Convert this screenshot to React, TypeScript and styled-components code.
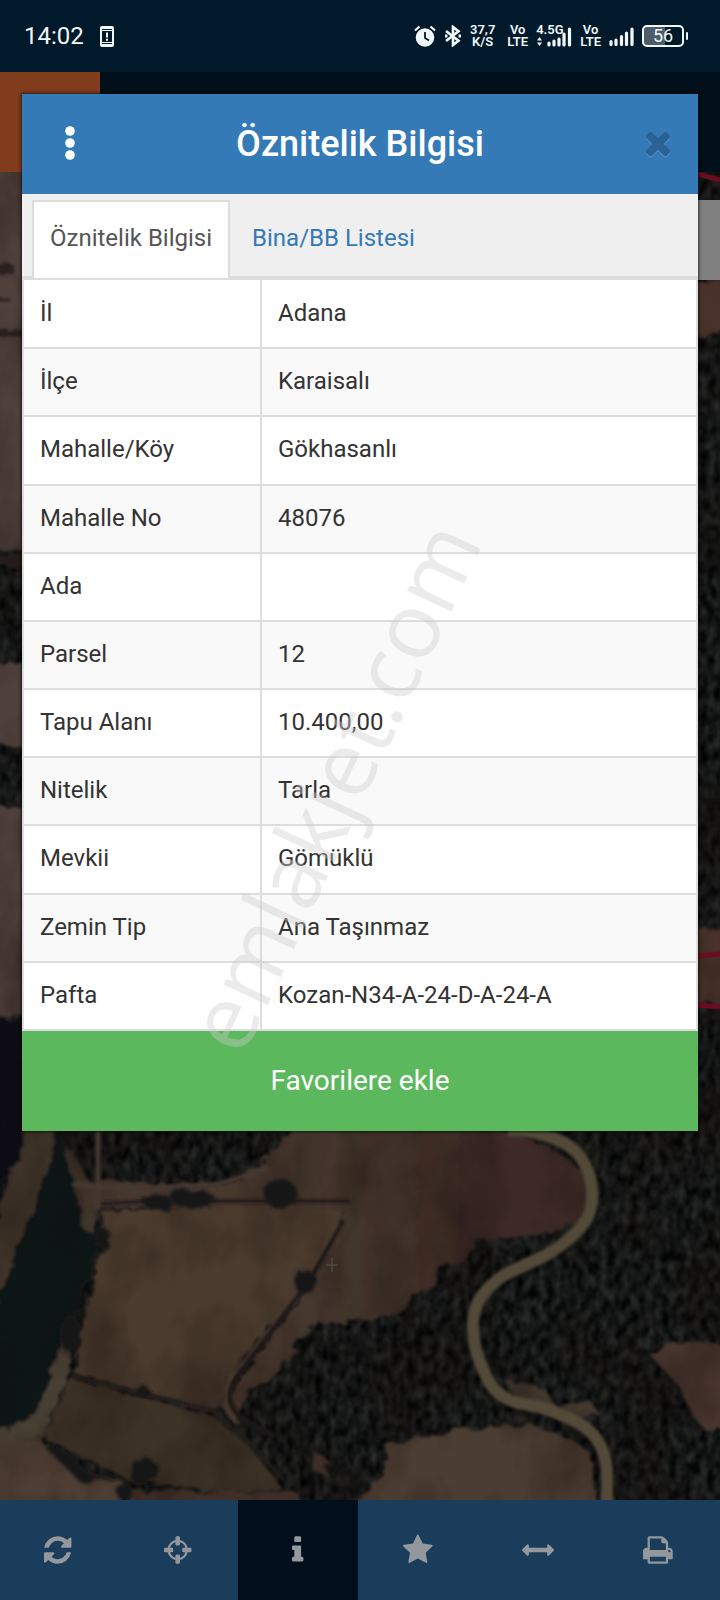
import styled, { createGlobalStyle } from "styled-components";

const headerBlue = "#347ab7";
const borderGray = "#dddddd";
const green = "#5cb85c";

const GlobalStyle = createGlobalStyle`
  * {
    box-sizing: border-box;
  }

  body {
    margin: 0;
    background: #00101c;
    color: #333333;
    font-family: Roboto, "Noto Sans", sans-serif;
    font-size: 24px;
    line-height: 32px;
  }

  button {
    border: none;
    padding: 0;
    background: transparent;
    color: inherit;
    font: inherit;
    cursor: pointer;
  }
`;

const Screen = styled.div`
  position: relative;
  display: flex;
  flex-direction: column;
  min-height: 100vh;
  overflow: hidden;
`;

const StatusBar = styled.header`
  display: flex;
  align-items: center;
  justify-content: space-between;
  height: 72px;
  padding: 0 36px 0 24px;
  background: #001a2b;
  color: #f2f7fa;
`;

const StatusGroup = styled.div<{ $gap: number }>`
  display: flex;
  align-items: center;
  gap: ${(p) => p.$gap}px;
`;

const StackedLabel = styled.div`
  display: flex;
  flex-direction: column;
  align-items: center;
  font-size: 13px;
  font-weight: 600;
  line-height: 12px;
`;

const NetworkSpeed = styled(StackedLabel)`
  margin-right: 4px;
`;

const Network = styled(StackedLabel)`
  position: relative;
  align-items: flex-start;
  width: 36px;
  height: 24px;

  svg {
    position: absolute;
    left: 0;
    bottom: 1px;
  }
`;

const Toolbar = styled.div`
  display: flex;
  height: 100px;
  background: #000f19;
`;

const ToolbarAccent = styled.div`
  width: 100px;
  background: #803c1c;
`;

const MapArea = styled.main`
  position: relative;
  flex: 1;
  min-height: 0;
  overflow: hidden;
  background: #17191a;
`;

const MapDrawing = styled.svg`
  position: absolute;
  width: 100%;
  height: 100%;
`;

const BottomNav = styled.nav`
  display: flex;
  height: 100px;
  margin-left: -2px;
  padding-right: 2px;
  background: #1b3d5c;
`;

const NavButton = styled.button<{ $active?: boolean }>`
  display: flex;
  flex: 1;
  align-items: center;
  justify-content: center;
  background: ${(p) => (p.$active ? "#000f1b" : "#1b3d5c")};
  color: #94979b;
`;

const Overlay = styled.div`
  position: absolute;
  inset: 0;
  padding: 94px 22px;
`;

const Dialog = styled.section`
  position: relative;
  background: #ffffff;
  box-shadow: 0 0 3px 1px rgba(0, 0, 0, 0.6);
`;

const DialogHeader = styled.div`
  display: flex;
  align-items: center;
  height: 100px;
  padding: 0 28px 0 36px;
  background: ${headerBlue};
  color: #ffffff;
`;

const Title = styled.h1`
  flex: 1;
  margin: 0;
  padding-right: 8px;
  font-size: 36px;
  font-weight: 500;
  line-height: 48px;
  text-align: center;
`;

const IconButton = styled.button<{ $faded?: boolean }>`
  display: flex;
  color: ${(p) => (p.$faded ? "#2a6294" : "#ffffff")};
  filter: ${(p) => (p.$faded ? "drop-shadow(0 2px 0 #4a8ac2)" : "none")};
`;

const TabList = styled.div`
  display: flex;
  padding: 6px 10px 0;
  border-bottom: 4px solid ${borderGray};
  background: #efefef;
`;

const Tab = styled.button<{ $active?: boolean }>`
  height: 78px;
  margin: 0 4px -2px 0;
  padding: 0 16px 4px;
  border: 2px solid ${(p) => (p.$active ? borderGray : "transparent")};
  border-bottom: none;
  background: ${(p) => (p.$active ? "#ffffff" : "transparent")};
  color: ${(p) => (p.$active ? "#555555" : headerBlue)};
`;

const AttributeTable = styled.table`
  width: 100%;
  height: 751px;
  border-collapse: collapse;

  tr:nth-child(even) {
    background: #f9f9f9;
  }

  th,
  td {
    height: 68px;
    padding: 0 16px 2px;
    border: 2px solid ${borderGray};
    font-weight: 400;
    text-align: left;
  }

  th {
    width: 238px;
  }

  tr:first-child > * {
    border-top: none;
  }
`;

const FavoriteButton = styled.button`
  display: block;
  width: 100%;
  height: 100px;
  background: ${green};
  color: #ffffff;
  font-size: 28px;
`;

const Watermark = styled.div`
  position: absolute;
  top: 50%;
  left: 50%;
  color: rgba(205, 205, 205, 0.4);
  font-family: "Open Sans", "Noto Sans", sans-serif;
  font-size: 91px;
  line-height: 90px;
  pointer-events: none;
  transform: translate(-55%, -66%) rotate(-65deg);
`;

interface GlyphProps {
  width: number;
  top?: number;
  d: string;
}

// Icon outlines share a 1792 unit em square, drawn at 32px
function Glyph({ width, top = 0, d }: GlyphProps) {
  return (
    <svg
      height="32"
      width={(width / 1792) * 32}
      viewBox={`0 ${top} ${width} 1792`}
      fill="currentColor"
      aria-hidden="true"
    >
      <path d={d} />
    </svg>
  );
}

const navItems: { label: string; active?: boolean; glyph: GlyphProps }[] = [
  {
    label: "Yenile",
    glyph: {
      width: 1536,
      top: -128,
      d: "M1511 928q0 5-1 7-64 268-268 434.5t-478 166.5q-146 0-282.5-55t-243.5-157l-129 129q-19 19-45 19t-45-19-19-45v-448q0-26 19-45t45-19h448q26 0 45 19t19 45-19 45l-137 137q71 66 161 102t187 36q134 0 250-65t186-179q11-17 53-117 8-23 30-23h192q13 0 22.5 9.5t9.5 22.5zm25-800v448q0 26-19 45t-45 19h-448q-26 0-45-19t-19-45 19-45l138-138q-148-137-349-137-134 0-250 65t-186 179q-11 17-53 117-8 23-30 23h-199q-13 0-22.5-9.5t-9.5-22.5v-7q65-268 270-434.5t480-166.5q146 0 284 55.5t245 156.5l130-129q19-19 45-19t45 19 19 45z",
    },
  },
  {
    label: "Konum",
    glyph: {
      width: 1536,
      d: "M1197 1024h-109q-26 0-45-19t-19-45v-128q0-26 19-45t45-19h109q-32-108-112.5-188.5t-188.5-112.5v109q0 26-19 45t-45 19h-128q-26 0-45-19t-19-45v-109q-108 32-188.5 112.5t-112.5 188.5h109q26 0 45 19t19 45v128q0 26-19 45t-45 19h-109q32 108 112.5 188.5t188.5 112.5v-109q0-26 19-45t45-19h128q26 0 45 19t19 45v109q108-32 188.5-112.5t112.5-188.5zm339-192v128q0 26-19 45t-45 19h-143q-37 161-154.5 278.5t-278.5 154.5v143q0 26-19 45t-45 19h-128q-26 0-45-19t-19-45v-143q-161-37-278.5-154.5t-154.5-278.5h-143q-26 0-45-19t-19-45v-128q0-26 19-45t45-19h143q37-161 154.5-278.5t278.5-154.5v-143q0-26 19-45t45-19h128q26 0 45 19t19 45v143q161 37 278.5 154.5t154.5 278.5h143q26 0 45 19t19 45z",
    },
  },
  {
    label: "Bilgi",
    active: true,
    glyph: {
      width: 640,
      d: "M640 1344v128q0 26-19 45t-45 19h-512q-26 0-45-19t-19-45v-128q0-26 19-45t45-19h64v-384h-64q-26 0-45-19t-19-45v-128q0-26 19-45t45-19h384q26 0 45 19t19 45v576h64q26 0 45 19t19 45zm-128-1152v192q0 26-19 45t-45 19h-256q-26 0-45-19t-19-45v-192q0-26 19-45t45-19h256q26 0 45 19t19 45z",
    },
  },
  {
    label: "Favoriler",
    glyph: {
      width: 1664,
      top: -32,
      d: "M1664 615q0 22-26 48l-363 354 86 500q1 7 1 20 0 21-10.5 35.5t-30.5 14.5q-19 0-40-12l-449-236-449 236q-22 12-40 12-21 0-31.5-14.5t-10.5-35.5q0-6 2-20l86-500-364-354q-25-27-25-48 0-37 56-46l502-73 225-455q19-41 49-41t49 41l225 455 502 73q56 9 56 46z",
    },
  },
  {
    label: "Ölçüm",
    glyph: {
      width: 1792,
      d: "M1792 896q0 26-19 45l-256 256q-19 19-45 19t-45-19-19-45v-128h-1024v128q0 26-19 45t-45 19-45-19l-256-256q-19-19-19-45t19-45l256-256q19-19 45-19t45 19 19 45v128h1024v-128q0-26 19-45t45-19 45 19l256 256q19 19 19 45z",
    },
  },
  {
    label: "Yazdır",
    glyph: {
      width: 1664,
      d: "M384 1536h896v-256h-896v256zm0-640h896v-384h-160q-40 0-68-28t-28-68v-160h-640v640zm1152 64q0-26-19-45t-45-19-45 19-19 45 19 45 45 19 45-19 19-45zm128 0v416q0 13-9.5 22.5t-22.5 9.5h-224v160q0 40-28 68t-68 28h-960q-40 0-68-28t-28-68v-160h-224q-13 0-22.5-9.5t-9.5-22.5v-416q0-79 56.5-135.5t135.5-56.5h64v-544q0-40 28-68t68-28h672q40 0 88 20t76 48l152 152q28 28 48 76t20 88v256h64q79 0 135.5 56.5t56.5 135.5z",
    },
  },
];

const attributes = [
  ["İl", "Adana"],
  ["İlçe", "Karaisalı"],
  ["Mahalle/Köy", "Gökhasanlı"],
  ["Mahalle No", "48076"],
  ["Ada", ""],
  ["Parsel", "12"],
  ["Tapu Alanı", "10.400,00"],
  ["Nitelik", "Tarla"],
  ["Mevkii", "Gömüklü"],
  ["Zemin Tip", "Ana Taşınmaz"],
  ["Pafta", "Kozan-N34-A-24-D-A-24-A"],
];

function PhoneAlertIcon() {
  return (
    <svg width="14" height="21" viewBox="0 0 14 21" aria-hidden="true">
      <rect width="14" height="21" rx="2" fill="currentColor" />
      <path d="M2 3.5h10M2 17.5h10" stroke="#001a2b" strokeWidth="1" />
      <rect x="2" y="5" width="10" height="11" fill="#001a2b" />
      <path d="M7 6.500v5M7 12.700v2" stroke="currentColor" strokeWidth="2" />
    </svg>
  );
}

function AlarmIcon() {
  return (
    <svg width="22" height="22" viewBox="0 0 22 22" aria-hidden="true">
      <circle cx="11" cy="12.500" r="9.300" fill="currentColor" />
      <path
        d="M1 5.500 5.500 1.500M21 5.500 16.500 1.500"
        stroke="currentColor"
        strokeWidth="2.200"
      />
      <path
        d="M11 7v6l4 2.500"
        fill="none"
        stroke="#001a2b"
        strokeWidth="1.800"
      />
    </svg>
  );
}

function BluetoothIcon() {
  return (
    <svg width="18" height="22" viewBox="0 0 18 22" aria-hidden="true">
      <path
        d="M2 6 14.500 15.800 9 20V2l5.500 4.200L2 16"
        fill="none"
        stroke="currentColor"
        strokeWidth="2.600"
      />
      <path d="M1 9.500h2.500v3H1zM14.500 9.500H17v3h-2.500z" fill="currentColor" />
    </svg>
  );
}

function SignalIcon() {
  return (
    <svg width="25" height="19" viewBox="0 0 25 19" aria-hidden="true">
      <path
        d="M2 17.500v-3M7 17.500V13M12.500 17.500V9.500M17.500 17.500V6M23 17.500V2"
        stroke="currentColor"
        strokeWidth="3.200"
        strokeLinecap="round"
      />
    </svg>
  );
}

function NetworkBarsIcon() {
  return (
    <svg width="36" height="22" viewBox="0 0 36 22" aria-hidden="true">
      <path d="M1 15.500 3.500 12 6 15.500zM1 17.500h5L3.500 21z" fill="currentColor" />
      <path
        d="M13 20v-2M18 20v-4M23 20v-6M28 20V9M33.500 20V4"
        stroke="currentColor"
        strokeWidth="3.200"
        strokeLinecap="round"
      />
    </svg>
  );
}

const BatteryShell = styled.div`
  position: relative;
  display: flex;
  align-items: center;
  justify-content: center;
  width: 42px;
  height: 22px;
  border: 2px solid currentColor;
  border-radius: 5px;
  background: linear-gradient(90deg, #4c5d69 56%, transparent 56%);
  font-size: 18px;
  line-height: 18px;

  &::after {
    position: absolute;
    top: 5px;
    right: -6px;
    width: 2px;
    height: 8px;
    border-radius: 1px;
    background: currentColor;
    content: "";
  }
`;

function Field({ d, fill }: { d: string; fill: string }) {
  return <path d={d} fill={fill} />;
}

function SatelliteMap() {
  return (
    <MapDrawing
      viewBox="0 172 720 1328"
      preserveAspectRatio="xMidYMid slice"
      aria-hidden="true"
    >
      <defs>
        <filter
          id="canopy"
          x="0"
          y="0"
          width="100%"
          height="100%"
          colorInterpolationFilters="sRGB"
        >
          <feTurbulence
            type="fractalNoise"
            baseFrequency="0.13 0.08"
            numOctaves="3"
            seed="4"
          />
          <feColorMatrix values="0.28 0 0 0 -0.06  0.28 0 0 0 -0.053  0.26 0 0 0 -0.045  0 0 0 0 1" />
          <feGaussianBlur stdDeviation="0.800" />
        </filter>
        <filter id="rough" x="-5%" y="-5%" width="110%" height="110%">
          <feTurbulence
            type="fractalNoise"
            baseFrequency="0.08"
            numOctaves="2"
            result="noise"
          />
          <feDisplacementMap in="SourceGraphic" in2="noise" scale="12" />
          <feGaussianBlur stdDeviation="1.500" />
        </filter>
        <filter
          id="soil"
          x="0"
          y="0"
          width="100%"
          height="100%"
          colorInterpolationFilters="sRGB"
        >
          <feTurbulence
            type="fractalNoise"
            baseFrequency="0.016 0.012"
            numOctaves="4"
            seed="9"
          />
          <feColorMatrix values="0 0 0 0 0.08  0 0 0 0 0.04  0 0 0 0 0.03  2 0 0 0 -0.75" />
        </filter>
        <filter id="soft">
          <feGaussianBlur stdDeviation="1.500" />
        </filter>
        <linearGradient id="upperField" x1="0" x2="1">
          <stop offset="0.400" stopColor="#46392f" />
          <stop offset="0.750" stopColor="#3d2c26" />
        </linearGradient>
      </defs>

      <rect y="172" width="720" height="1328" filter="url(#canopy)" />

      <g filter="url(#rough)">
        {/* strips on both sides of the dialog */}
        <Field d="M-10 160H34V550H-10zM-10 662H34V746H-10zM-10 806H34V1015H-10z" fill="#50403a" />
        <Field d="M690 280H730V332L690 338zM690 930 730 926V1006L690 1002z" fill="#4a3029" />
        <Field d="M-10 330H34V337H-10zM-10 264H14V274H-10zM-10 296H10V302H-10zM-10 556H34V566H-10z" fill="#292421" />

        {/* river bank and water */}
        <Field d="M28 1120H60L48 1180 70 1150 100 1200 90 1250 70 1300 72 1360 40 1440 -10 1460V1240z" fill="#40342a" />
        <Field d="M-10 1020H28L20 1160-10 1205z" fill="#0d1013" />
        <Field d="M58 1120 75 1190 84 1230 104 1234 96 1262 80 1305 62 1335 58 1355 43 1404 30 1422 -10 1434V1320L12 1262 36 1200 52 1160z" fill="#0c1619" />
        <Field d="M60 1354 71 1360 66 1385 44 1434 -10 1450V1432L32 1420z" fill="#4a4035" />

        {/* fields */}
        <Field d="M78 1182 110 1180 155 1184 230 1185 265 1160 300 1120 480 1120 550 1148 582 1170 593 1195 582 1222 540 1234 475 1242 465 1262 438 1266 434 1284 412 1298 400 1312 372 1320 310 1325 282 1370 250 1390 235 1425 220 1405 300 1300 345 1212 85 1206z" fill="url(#upperField)" />
        <Field d="M100 1210 300 1206 343 1212 336 1245 300 1294 240 1362 216 1412 74 1374 82 1320 103 1245z" fill="#4b3b2f" />
        <Field d="M72 1378 214 1416 250 1446 283 1490 220 1492 130 1480 44 1438z" fill="#3e3026" />
        <Field d="M-10 1444 40 1440 86 1474 122 1480V1510H-10z" fill="#4e3d33" />
        <Field d="M386 1444 460 1430 530 1424 572 1440 590 1453 598 1510H340L364 1494 384 1478z" fill="#4c3c31" />
        <Field d="M650 1355 670 1344 730 1343V1430H704L690 1410 680 1388z" fill="#46362d" />
        <Field d="M505 1380 545 1388 556 1408 590 1400 600 1414 580 1424 520 1404z" fill="#42372d" />
        <Field d="M130 1490 220 1492H300V1510H130zM312 1450 328 1460 326 1476 314 1470z" fill="#43332a" />
      </g>

      {/* soil shading */}
      <g opacity="0.4">
        <rect y="172" width="720" height="1328" filter="url(#soil)" />
      </g>

      <g filter="url(#soft)" fill="none" strokeLinejoin="round">
        <path d="M100 1204 150 1201 350 1201M72 1376 212 1410 250 1444 284 1480" stroke="#231f1a" strokeWidth="4" />
        <path d="M343 1220 312 1276 236 1378Q220 1402 244 1420L274 1436" stroke="#1b1815" strokeWidth="5" />
        <path d="M338 1224 300 1288 232 1376Q216 1404 240 1424" stroke="#4b3d31" strokeWidth="2" />
        <path d="M72 1184 140 1190 220 1184 268 1168M98 1130V1210" stroke="#453830" strokeWidth="5" />
        <path
          d="M508 1130Q560 1132 580 1156Q598 1184 590 1212Q580 1236 544 1256L506 1274Q474 1294 473 1322Q472 1348 486 1376Q496 1400 524 1404Q552 1408 580 1424Q604 1438 607 1470V1510"
          stroke="#524838"
          strokeWidth="12"
        />
      </g>

      {/* lone trees and hedges */}
      <g filter="url(#rough)" fill="#131513">
        <ellipse cx="280" cy="1193" rx="16" ry="15" />
        <ellipse cx="305" cy="1282" rx="11" ry="12" />
        <ellipse cx="157" cy="1202" rx="14" ry="8" />
        <ellipse cx="192" cy="1198" rx="22" ry="9" />
        <ellipse cx="102" cy="1238" rx="9" ry="10" />
        <ellipse cx="70" cy="1334" rx="11" ry="18" />
        <ellipse cx="143" cy="1391" rx="7" ry="4" />
        <ellipse cx="144" cy="1472" rx="15" ry="14" />
        <ellipse cx="124" cy="1492" rx="9" ry="8" />
        <path d="M40 1442 64 1450 90 1474 120 1480 80 1482z" />
      </g>

      <path d="M326 1265h12M332 1258v14" stroke="#55564b" />
      <path
        d="M698 174 720 180M698 956 720 954M698 1005 720 1007"
        stroke="#6c0c20"
        strokeWidth="5"
      />
      <rect x="698" y="200" width="22" height="80" fill="#808080" />
    </MapDrawing>
  );
}

function App() {
  return (
    <Screen>
      <GlobalStyle />
      <StatusBar>
        <StatusGroup $gap={16}>
          <span>14:02</span>
          <PhoneAlertIcon />
        </StatusGroup>
        <StatusGroup $gap={8}>
          <AlarmIcon />
          <BluetoothIcon />
          <NetworkSpeed>
            <span>37,7</span>
            <span>K/S</span>
          </NetworkSpeed>
          <StackedLabel>
            <span>Vo</span>
            <span>LTE</span>
          </StackedLabel>
          <Network>
            <span>4.5G</span>
            <NetworkBarsIcon />
          </Network>
          <StackedLabel>
            <span>Vo</span>
            <span>LTE</span>
          </StackedLabel>
          <SignalIcon />
          <BatteryShell>56</BatteryShell>
        </StatusGroup>
      </StatusBar>

      <Toolbar>
        <ToolbarAccent />
      </Toolbar>

      <MapArea>
        <SatelliteMap />
      </MapArea>

      <BottomNav>
        {navItems.map((item) => (
          <NavButton
            key={item.label}
            type="button"
            aria-label={item.label}
            $active={item.active}
          >
            <Glyph {...item.glyph} />
          </NavButton>
        ))}
      </BottomNav>

      <Overlay>
        <Dialog role="dialog" aria-labelledby="dialog-title">
          <DialogHeader>
            <IconButton type="button" aria-label="Menü">
              <svg width="24" height="36" viewBox="0 0 24 36" fill="currentColor">
                <circle cx="12" cy="5" r="4.800" />
                <circle cx="12" cy="17" r="4.800" />
                <circle cx="12" cy="29" r="4.800" />
              </svg>
            </IconButton>
            <Title id="dialog-title">Öznitelik Bilgisi</Title>
            <IconButton type="button" aria-label="Kapat" $faded>
              <svg
                width="24"
                height="24"
                viewBox="110 258 1188 1188"
                fill="currentColor"
              >
                <path d="M1298 1214q0 40-28 68l-136 136q-28 28-68 28t-68-28l-294-294-294 294q-28 28-68 28t-68-28l-136-136q-28-28-28-68t28-68l294-294-294-294q-28-28-28-68t28-68l136-136q28-28 68-28t68 28l294 294 294-294q28-28 68-28t68 28l136 136q28 28 28 68t-28 68l-294 294 294 294q28 28 28 68z" />
              </svg>
            </IconButton>
          </DialogHeader>

          <TabList role="tablist">
            <Tab type="button" role="tab" aria-selected="true" $active>
              Öznitelik Bilgisi
            </Tab>
            <Tab type="button" role="tab" aria-selected="false">
              Bina/BB Listesi
            </Tab>
          </TabList>

          <AttributeTable>
            <tbody>
              {attributes.map(([name, value]) => (
                <tr key={name}>
                  <th scope="row">{name}</th>
                  <td>{value}</td>
                </tr>
              ))}
            </tbody>
          </AttributeTable>

          <FavoriteButton type="button">Favorilere ekle</FavoriteButton>
        </Dialog>
      </Overlay>

      <Watermark>emlakjet.com</Watermark>
    </Screen>
  );
}

export default App;
